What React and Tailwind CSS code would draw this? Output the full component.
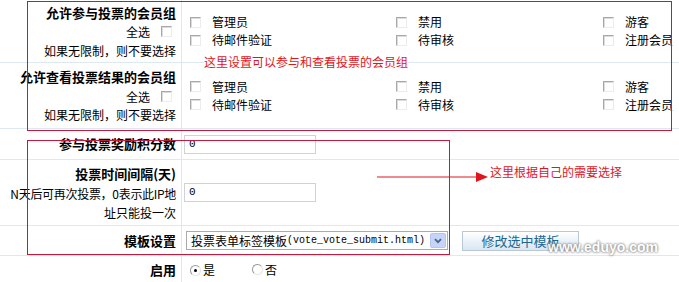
import React from "react";

const Check = () => (
  <span className="inline-block w-[11px] h-[11px] shrink-0 border-t border-l border-[#a8a8a8] border-b border-r border-b-[#ececec] border-r-[#ececec] bg-white shadow-[inset_1px_1px_0_#dcdcdc]" />
);

const Item = ({ label }) => (
  <div className="flex items-center h-[18px]">
    <Check />
    <span className="ml-[11px] whitespace-nowrap">{label}</span>
  </div>
);

const Groups = () => (
  <div className="grid grid-cols-[206px_207px_200px] pl-[8px]">
    <Item label="管理员" />
    <Item label="禁用" />
    <Item label="游客" />
    <Item label="待邮件验证" />
    <Item label="待审核" />
    <Item label="注册会员" />
  </div>
);

const Row = ({ h, left, children }) => (
  <div className={`flex border-b border-[#dde8f0] ${h}`}>
    <div className="w-[182px] shrink-0 border-r border-[#dde8f0] pr-[5px] flex flex-col justify-center items-end text-right">
      {left}
    </div>
    <div className="flex-1 flex items-center min-w-0">{children}</div>
  </div>
);

const Title = ({ children }) => (
  <div className="h-[20px] leading-[20px] text-[13px] font-bold whitespace-nowrap">{children}</div>
);

const SelAll = () => (
  <>
    <div className="h-[19px] flex items-center whitespace-nowrap">
      全选<span className="ml-[11px] mr-[4px]"><Check /></span>
    </div>
    <div className="h-[18px] leading-[18px] whitespace-nowrap">如果无限制，则不要选择</div>
  </>
);

const Radio = ({ on }) => (
  <span className="relative inline-block w-[11px] h-[11px] rounded-full border border-[#9a9a9a] border-b-[#e6e6e6] border-r-[#e6e6e6] bg-white">
    {on && <span className="absolute left-[3px] top-[3px] w-[3px] h-[3px] rounded-full bg-black" />}
  </span>
);

export default function App() {
  return (
    <div className="relative w-[679px] h-[282px] overflow-hidden bg-white text-[12px] text-black font-['Noto_Sans_CJK_SC',sans-serif]">
      <Row h="h-[63px]" left={<><Title>允许参与投票的会员组</Title><SelAll /></>}>
        <Groups />
      </Row>
      <Row h="h-[66px]" left={<><Title>允许查看投票结果的会员组</Title><SelAll /></>}>
        <Groups />
      </Row>
      <Row h="h-[31px]" left={<Title>参与投票奖励积分数</Title>}>
        <div className="ml-[2px] w-[132px] h-[19px] border border-[#ccd3d9] flex items-center pl-[4px] font-['Liberation_Mono',monospace] text-[11px]">0</div>
      </Row>
      <Row
        h="h-[66px]"
        left={
          <>
            <Title>投票时间间隔(天)</Title>
            <div className="h-[19px] leading-[19px] whitespace-nowrap tracking-[-0.3px]">N天后可再次投票，0表示此IP地</div>
            <div className="h-[19px] leading-[19px] whitespace-nowrap">址只能投一次</div>
          </>
        }
      >
        <div className="ml-[2px] w-[132px] h-[19px] border border-[#ccd3d9] flex items-center pl-[4px] font-['Liberation_Mono',monospace] text-[11px]">0</div>
      </Row>
      <Row h="h-[30px]" left={<Title>模板设置</Title>}>
        <div className="ml-[4px] w-[262px] h-[19px] border border-[#a5acb2] flex items-center pl-[4px] pr-[1px] bg-white">
          <span className="whitespace-nowrap">投票表单标签模板</span>
          <span className="whitespace-nowrap font-['Liberation_Mono',monospace] text-[10px]">(vote_vote_submit.html)</span>
          <span className="ml-auto w-[16px] h-[15px] rounded-[2px] bg-[#c5d5f7] border border-[#b4c6ee] flex items-center justify-center">
            <svg width="8" height="6" viewBox="0 0 8 6"><path d="M1 1.2 L4 4.2 L7 1.2" fill="none" stroke="#4d6185" strokeWidth="1.8" /></svg>
          </span>
        </div>
        <div className="ml-[14px] w-[117px] h-[20px] border border-[#b8c8d6] bg-[linear-gradient(#ffffff,#d8e6f2)] flex items-center justify-center text-[13px] text-[#1d6690] whitespace-nowrap">
          修改选中模板
        </div>
      </Row>
      <div className="flex h-[28px]">
        <div className="w-[182px] shrink-0 border-r border-[#dde8f0] pr-[5px] flex items-center justify-end">
          <span className="text-[13px] font-bold">启用</span>
        </div>
        <div className="flex items-center pl-[8px]">
          <Radio on />
          <span className="ml-[2px]">是</span>
          <span className="ml-[37px]"><Radio /></span>
          <span className="ml-[2px]">否</span>
        </div>
      </div>

      {/* annotations */}
      <div className="absolute left-[27px] top-[1px] w-[645px] h-[130px] border-[1.5px] border-[#c4183c] pointer-events-none" />
      <div className="absolute left-[27px] top-[140px] w-[423px] h-[115px] border-[1.5px] border-[#c4183c] pointer-events-none" />
      <div className="absolute left-[204px] top-[53px] text-[12px] text-[#e0161e] whitespace-nowrap bg-white leading-[18px]">这里设置可以参与和查看投票的会员组</div>
      <div className="absolute left-[377px] top-[171px]">
        <svg width="112" height="12" viewBox="0 0 112 12">
          <line x1="0" y1="6" x2="102" y2="6" stroke="#e0161e" strokeWidth="1.2" />
          <polygon points="99,1 111,6 99,11" fill="#e0161e" />
        </svg>
      </div>
      <div className="absolute left-[490px] top-[163px] text-[12px] text-[#e0161e] whitespace-nowrap leading-[18px]">这里根据自己的需要选择</div>
      <div className="absolute left-[548px] top-[238px] text-[14px] leading-[18px] font-bold text-white whitespace-nowrap font-['Liberation_Sans',sans-serif] [text-shadow:0_0_2px_#666,0_0_3px_#888] opacity-90">www.eduyo.com</div>
    </div>
  );
}
